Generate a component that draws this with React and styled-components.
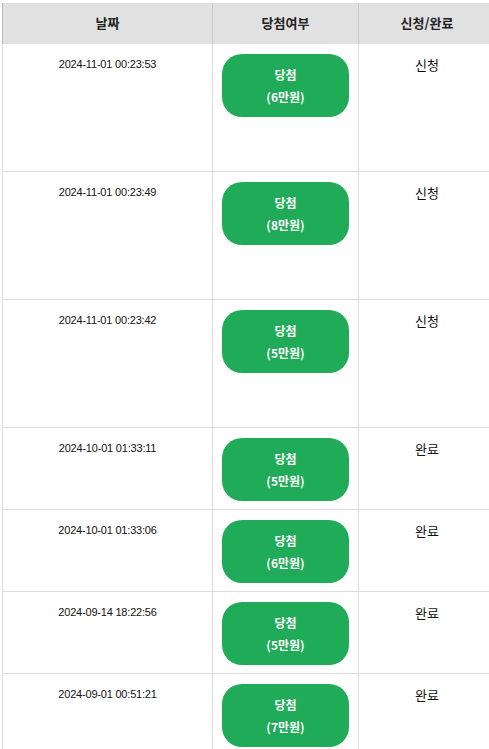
import styled, { createGlobalStyle } from "styled-components";

const GlobalStyle = createGlobalStyle`
  html, body {
    margin: 0;
    padding: 0;
    background: #fff;
    overflow: hidden;
  }
  body {
    font-family: "Noto Sans CJK KR", "Liberation Sans", sans-serif;
    color: #222;
  }
`;

const list = [
  { date: "2024-11-01 00:23:53", prize: 6, state: "신청", tall: true },
  { date: "2024-11-01 00:23:49", prize: 8, state: "신청", tall: true },
  { date: "2024-11-01 00:23:42", prize: 5, state: "신청", tall: true },
  { date: "2024-10-01 01:33:11", prize: 5, state: "완료" },
  { date: "2024-10-01 01:33:06", prize: 6, state: "완료" },
  { date: "2024-09-14 18:22:56", prize: 5, state: "완료" },
  { date: "2024-09-01 00:51:21", prize: 7, state: "완료" },
];

const App = () => {
  return (
    <>
      <GlobalStyle />
      <StWrap>
        <StTable>
          <StHead>
            <StTh>날짜</StTh>
            <StTh>당첨여부</StTh>
            <StTh>신청/완료</StTh>
          </StHead>
          {list.map((item) => (
            <StRow key={item.date} $tall={item.tall}>
              <StDate>{item.date}</StDate>
              <StCell>
                <StWinBtn>
                  당첨
                  <br />({item.prize}만원)
                </StWinBtn>
              </StCell>
              <StState>{item.state}</StState>
            </StRow>
          ))}
        </StTable>
      </StWrap>
    </>
  );
};

export default App;

const StWrap = styled.div`
  padding: 3px 0 0 2px;
  width: 487px;
  overflow: hidden;
`;

const StTable = styled.div`
  width: 493px;
  border-left: 1px solid #dcdcdc;
`;

const StHead = styled.div`
  display: grid;
  grid-template-columns: 210px 146px 137px;
  height: 41px;
  background: #e1e1e1;
  margin-left: -1px;
  border-left: 1px solid #b9b9b9;
`;

const StTh = styled.div`
  display: flex;
  align-items: center;
  justify-content: center;
  font-size: 13px;
  font-weight: 700;
  color: #222;
  border-right: 1px solid #c8c8c8;
  padding-bottom: 3px;
`;

const StRow = styled.div`
  display: grid;
  grid-template-columns: 210px 146px 137px;
  height: ${(props) => (props.$tall ? "128px" : "82px")};
  box-sizing: border-box;
  border-bottom: 1px solid #dcdcdc;
`;

const StCell = styled.div`
  border-right: 1px solid #dcdcdc;
  padding: 10px 9px 0 9px;
  box-sizing: border-box;
`;

const StDate = styled(StCell)`
  text-align: center;
  font-family: "Liberation Sans", sans-serif;
  font-size: 11px;
  letter-spacing: -0.2px;
  color: #111;
  padding-top: 14px;
`;

const StState = styled(StCell)`
  text-align: center;
  font-size: 13px;
  color: #111;
  padding-top: 11px;
`;

const StWinBtn = styled.div`
  width: 127px;
  height: 63px;
  border-radius: 20px;
  background: #1fab57;
  color: #fff;
  font-size: 12px;
  font-weight: 700;
  line-height: 22px;
  display: flex;
  flex-direction: column;
  align-items: center;
  justify-content: center;
  text-align: center;
`;
